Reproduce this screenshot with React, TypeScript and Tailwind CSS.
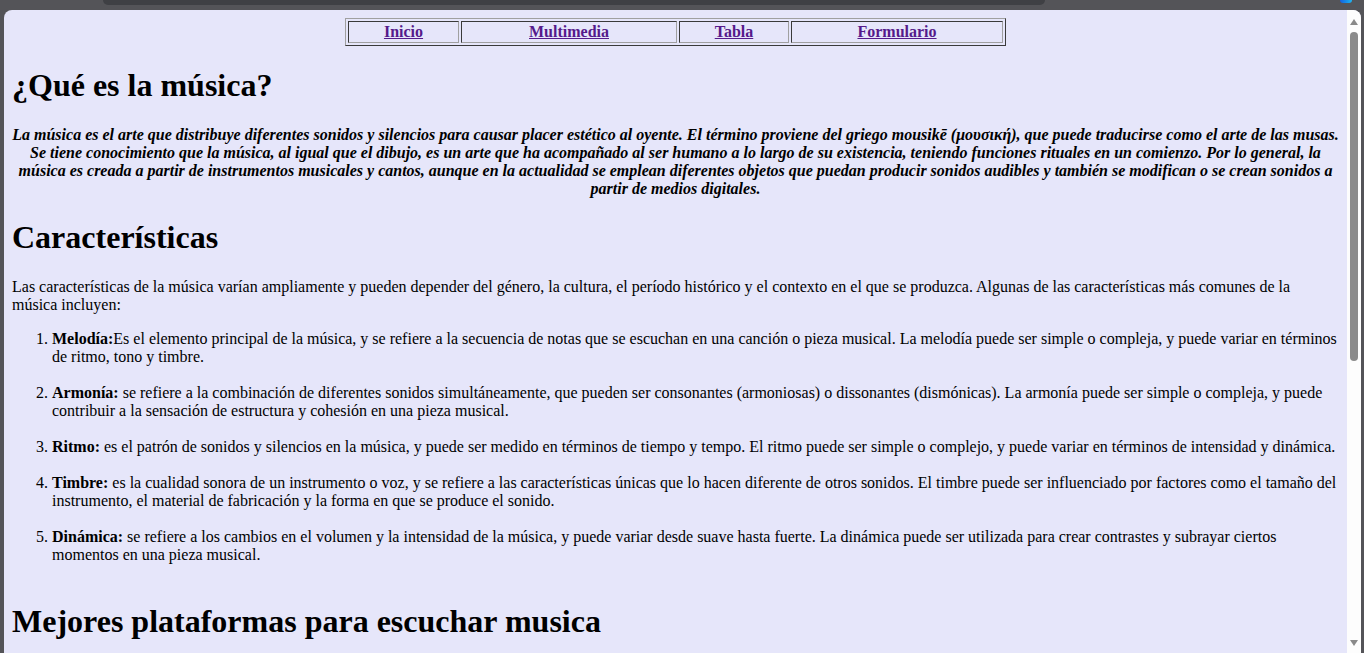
import React from 'react'

const navItems = [
  { label: 'Inicio', width: 'w-[111px]' },
  { label: 'Multimedia', width: 'w-[216px]' },
  { label: 'Tabla', width: 'w-[110px]' },
  { label: 'Formulario', width: 'w-[212px]' },
]

const items = [
  {
    title: 'Melodía:',
    text: 'Es el elemento principal de la música, y se refiere a la secuencia de notas que se escuchan en una canción o pieza musical. La melodía puede ser simple o compleja, y puede variar en términos de ritmo, tono y timbre.',
  },
  {
    title: 'Armonía:',
    text: ' se refiere a la combinación de diferentes sonidos simultáneamente, que pueden ser consonantes (armoniosas) o dissonantes (dismónicas). La armonía puede ser simple o compleja, y puede contribuir a la sensación de estructura y cohesión en una pieza musical.',
  },
  {
    title: 'Ritmo:',
    text: ' es el patrón de sonidos y silencios en la música, y puede ser medido en términos de tiempo y tempo. El ritmo puede ser simple o complejo, y puede variar en términos de intensidad y dinámica.',
  },
  {
    title: 'Timbre:',
    text: ' es la cualidad sonora de un instrumento o voz, y se refiere a las características únicas que lo hacen diferente de otros sonidos. El timbre puede ser influenciado por factores como el tamaño del instrumento, el material de fabricación y la forma en que se produce el sonido.',
  },
  {
    title: 'Dinámica:',
    text: ' se refiere a los cambios en el volumen y la intensidad de la música, y puede variar desde suave hasta fuerte. La dinámica puede ser utilizada para crear contrastes y subrayar ciertos momentos en una pieza musical.',
  },
]

const Scrollbar = () => (
  <div className="w-[14px] bg-[#fdfdfd] flex flex-col items-center">
    <svg width="10" height="8" viewBox="0 0 10 8" className="mt-[8px]">
      <path d="M5 1 L9 7 L1 7 Z" fill="#8a8a8a" />
    </svg>
    <div className="mt-[6px] w-[8px] h-[329px] rounded-full bg-[#8b8b8b]" />
    <div className="flex-1" />
    <svg width="10" height="8" viewBox="0 0 10 8" className="mb-[6px]">
      <path d="M1 1 L9 1 L5 7 Z" fill="#8a8a8a" />
    </svg>
  </div>
)

export default function App() {
  return (
    <div className="w-[1364px] h-[653px] bg-[#545458] flex flex-col overflow-hidden">
      {/* browser chrome strip */}
      <div className="h-[10px] flex items-start">
        <div className="ml-[103px] w-[942px] h-[5px] rounded-b-[8px] bg-[#3f4044]" />
        <div className="ml-[295px] w-[12px] h-[3px] rounded-b-[3px] bg-gradient-to-r from-[#1a5fe0] to-[#22b5f0]" />
      </div>

      <div className="flex-1 min-h-0 flex pl-[4px] pr-[3px]">
        <div className="flex-1 flex rounded-t-[8px] overflow-hidden bg-[#e6e6fa]">
          <div
            className="flex-1 overflow-hidden p-[8px] text-black text-[16px] leading-[normal]"
            style={{ fontFamily: '"Liberation Serif", "Times New Roman", serif' }}
          >
            <table className="mx-auto border-separate border-spacing-[2px] border border-t-[#a0a0a0] border-l-[#a0a0a0] border-b-[#3a3a3a] border-r-[#3a3a3a]">
              <tbody>
                <tr>
                  {navItems.map(item => (
                    <th
                      key={item.label}
                      className={`${item.width} p-[1px] border border-t-[#3a3a3a] border-l-[#3a3a3a] border-b-[#a0a0a0] border-r-[#a0a0a0] font-bold text-center`}
                    >
                      <a href="#" className="text-[#551a8b] underline">
                        {item.label}
                      </a>
                    </th>
                  ))}
                </tr>
              </tbody>
            </table>

            <h1 className="text-[32px] font-bold my-[21.44px]">¿Qué es la música?</h1>

            <p className="text-center font-bold italic my-[16px]">
              La música es el arte que distribuye diferentes sonidos y silencios para causar placer estético al oyente. El término proviene del griego mousikē (μουσική), que puede traducirse como el arte de las musas. Se tiene conocimiento que la música, al igual que el dibujo, es un arte que ha acompañado al ser humano a lo largo de su existencia, teniendo funciones rituales en un comienzo. Por lo general, la música es creada a partir de instrumentos musicales y cantos, aunque en la actualidad se emplean diferentes objetos que puedan producir sonidos audibles y también se modifican o se crean sonidos a partir de medios digitales.
            </p>

            <h1 className="text-[32px] font-bold my-[21.44px]">Características</h1>

            <p className="my-[16px]">
              Las características de la música varían ampliamente y pueden depender del género, la cultura, el período histórico y el contexto en el que se produzca. Algunas de las características más comunes de la música incluyen:
            </p>

            <ol className="list-decimal pl-[40px] my-[16px]">
              {items.map(item => (
                <li key={item.title} className="pb-[18px]">
                  <b>{item.title}</b>
                  {item.text}
                </li>
              ))}
            </ol>

            <h1 className="text-[32px] font-bold my-[21px]">Mejores plataformas para escuchar musica</h1>
          </div>
          <Scrollbar />
        </div>
      </div>
    </div>
  )
}
